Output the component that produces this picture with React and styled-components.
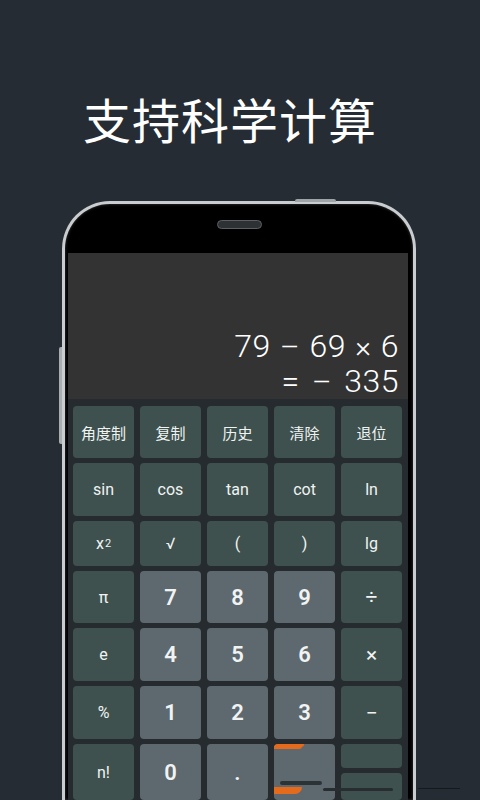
import React from "react";
import styled, { createGlobalStyle } from "styled-components";

const GlobalStyle = createGlobalStyle`
  html, body {
    margin: 0;
    padding: 0;
    background: #262c33;
  }
  * {
    box-sizing: border-box;
  }
`;

const rows = [
  [
    { label: "角度制", kind: "fn", cjk: true },
    { label: "复制", kind: "fn", cjk: true },
    { label: "历史", kind: "fn", cjk: true },
    { label: "清除", kind: "fn", cjk: true },
    { label: "退位", kind: "fn", cjk: true },
  ],
  [
    { label: "sin", kind: "fn" },
    { label: "cos", kind: "fn" },
    { label: "tan", kind: "fn" },
    { label: "cot", kind: "fn" },
    { label: "ln", kind: "fn" },
  ],
  [
    { label: "x²", kind: "fn", sup: true },
    { label: "√", kind: "fn" },
    { label: "(", kind: "fn" },
    { label: ")", kind: "fn" },
    { label: "lg", kind: "fn" },
  ],
  [
    { label: "π", kind: "fn" },
    { label: "7", kind: "num" },
    { label: "8", kind: "num" },
    { label: "9", kind: "num" },
    { label: "÷", kind: "op" },
  ],
  [
    { label: "e", kind: "fn" },
    { label: "4", kind: "num" },
    { label: "5", kind: "num" },
    { label: "6", kind: "num" },
    { label: "×", kind: "op" },
  ],
  [
    { label: "%", kind: "fn" },
    { label: "1", kind: "num" },
    { label: "2", kind: "num" },
    { label: "3", kind: "num" },
    { label: "−", kind: "op" },
  ],
];

const App = () => {
  return (
    <Page>
      <GlobalStyle />
      <Title>支持科学计算</Title>
      <Phone>
        <TopButton />
        <SideButton />
        <Bezel>
          <Speaker />
        </Bezel>
        <Screen>
          <Display>
            <Line>
              79 <Op>–</Op> 69 <Op>×</Op> 6
            </Line>
            <Line>
              = <Op $wide>–</Op> 335
            </Line>
          </Display>
          <Keypad>
            {rows.map((row, r) =>
              row.map((key, c) => (
                <Key key={`${r}-${c}`} $kind={key.kind} $cjk={key.cjk}>
                  {key.sup ? (
                    <>
                      x<Sup>2</Sup>
                    </>
                  ) : (
                    key.label
                  )}
                </Key>
              ))
            )}
            <Key $kind="fn">n!</Key>
            <Key $kind="num">0</Key>
            <Key $kind="num">.</Key>
            <EqualKey>
              <Streak />
            </EqualKey>
            <SplitCell>
              <HalfKey />
              <HalfKey />
            </SplitCell>
          </Keypad>
        </Screen>
      </Phone>
      <EdgeLine />
    </Page>
  );
};

const Page = styled.div`
  position: relative;
  width: 480px;
  height: 800px;
  overflow: hidden;
  background: #262c33;
  display: flex;
  flex-direction: column;
`;

const Title = styled.h1`
  margin: 0;
  padding: 86px 20px 0 0;
  height: 202px;
  text-align: center;
  color: #ffffff;
  font-family: "Noto Sans CJK SC", "Noto Sans", sans-serif;
  font-weight: 400;
  font-size: 48px;
  line-height: 64px;
  letter-spacing: 1px;
`;

const Phone = styled.div`
  position: relative;
  margin-left: 62px;
  width: 354px;
  flex: 1;
  background: #000000;
  border: 3px solid #c9cdd0;
  border-bottom: none;
  border-radius: 48px 48px 0 0;
  padding: 0 5px 0 3px;
  display: flex;
  flex-direction: column;
  box-shadow: inset 0 0 3px rgba(255, 255, 255, 0.25);
`;

const TopButton = styled.div`
  position: absolute;
  top: -5px;
  left: 230px;
  width: 41px;
  height: 3px;
  border-radius: 2px 2px 0 0;
  background: #9ea4a8;
`;

const SideButton = styled.div`
  position: absolute;
  left: -6px;
  top: 143px;
  width: 3px;
  height: 97px;
  border-radius: 2px 0 0 2px;
  background: #a8adb0;
`;

const Bezel = styled.div`
  height: 49px;
  display: flex;
  justify-content: center;
  padding-top: 16px;
  padding-left: 2px;
`;

const Speaker = styled.div`
  width: 45px;
  height: 9px;
  border-radius: 5px;
  background: #2e3134;
  border: 1px solid #5c6064;
`;

const Screen = styled.div`
  flex: 1;
  display: flex;
  flex-direction: column;
  background: #252b2e;
`;

const Display = styled.div`
  height: 146px;
  background: #333333;
  display: flex;
  flex-direction: column;
  justify-content: flex-end;
  align-items: flex-end;
  padding: 0 9px 0 0;
`;

const Line = styled.div`
  color: #ffffff;
  font-family: Roboto, "Liberation Sans", sans-serif;
  font-weight: 300;
  font-size: 32px;
  line-height: 35px;
  letter-spacing: 0.5px;
  white-space: pre;
`;

const Op = styled.span`
  display: inline-block;
  padding: 0 ${(p) => (p.$wide ? "4px" : "1px")};
  font-size: 30px;
`;

const Keypad = styled.div`
  display: grid;
  grid-template-columns: repeat(5, 61px);
  grid-template-rows: 52px 53px 45px 52px 53px 53px 56px;
  column-gap: 6px;
  row-gap: 5px;
  padding: 7px 0 0 5px;
`;

const Key = styled.div`
  display: flex;
  align-items: center;
  justify-content: center;
  border-radius: 4px;
  background: ${(p) => (p.$kind === "num" ? "#5e696f" : "#3e514e")};
  color: #f1f3f3;
  font-family: ${(p) =>
    p.$cjk
      ? '"Noto Sans CJK SC", "Noto Sans", sans-serif'
      : 'Roboto, "Liberation Sans", sans-serif'};
  font-size: ${(p) =>
    p.$kind === "num" ? "22px" : p.$kind === "op" ? "21px" : p.$cjk ? "15px" : "16px"};
  font-weight: ${(p) => (p.$kind === "num" ? 600 : 400)};
`;

const Sup = styled.sup`
  font-size: 11px;
  line-height: 0;
  vertical-align: 7px;
  margin-left: 1px;
`;

const EqualKey = styled.div`
  position: relative;
  border-radius: 4px;
  background: #5e696f;
  overflow: hidden;
  &::before,
  &::after {
    content: "";
    position: absolute;
    left: 0;
    width: 30px;
    height: 3px;
    background: #e46a1c;
    border-radius: 0 0 6px 0;
  }
  &::before {
    top: 0;
    box-shadow: -2px 2px 0 0 #e46a1c;
  }
  &::after {
    top: 43px;
    width: 28px;
    height: 7px;
    border-radius: 0 0 8px 0;
  }
`;

const Streak = styled.div`
  position: absolute;
  left: 6px;
  top: 37px;
  width: 42px;
  height: 4px;
  border-radius: 2px;
  background: #272d30;
  opacity: 0.9;
`;

const SplitCell = styled.div`
  position: relative;
  display: grid;
  grid-template-rows: 24px 1fr;
  row-gap: 5px;
  &::after {
    content: "";
    position: absolute;
    left: -18px;
    top: 44px;
    width: 70px;
    height: 3px;
    border-radius: 2px;
    background: #272d30;
  }
`;

const HalfKey = styled.div`
  border-radius: 4px;
  background: #3e514e;
`;

const EdgeLine = styled.div`
  position: absolute;
  left: 418px;
  top: 788px;
  width: 42px;
  height: 1px;
  background: #15191c;
`;

export default App;
